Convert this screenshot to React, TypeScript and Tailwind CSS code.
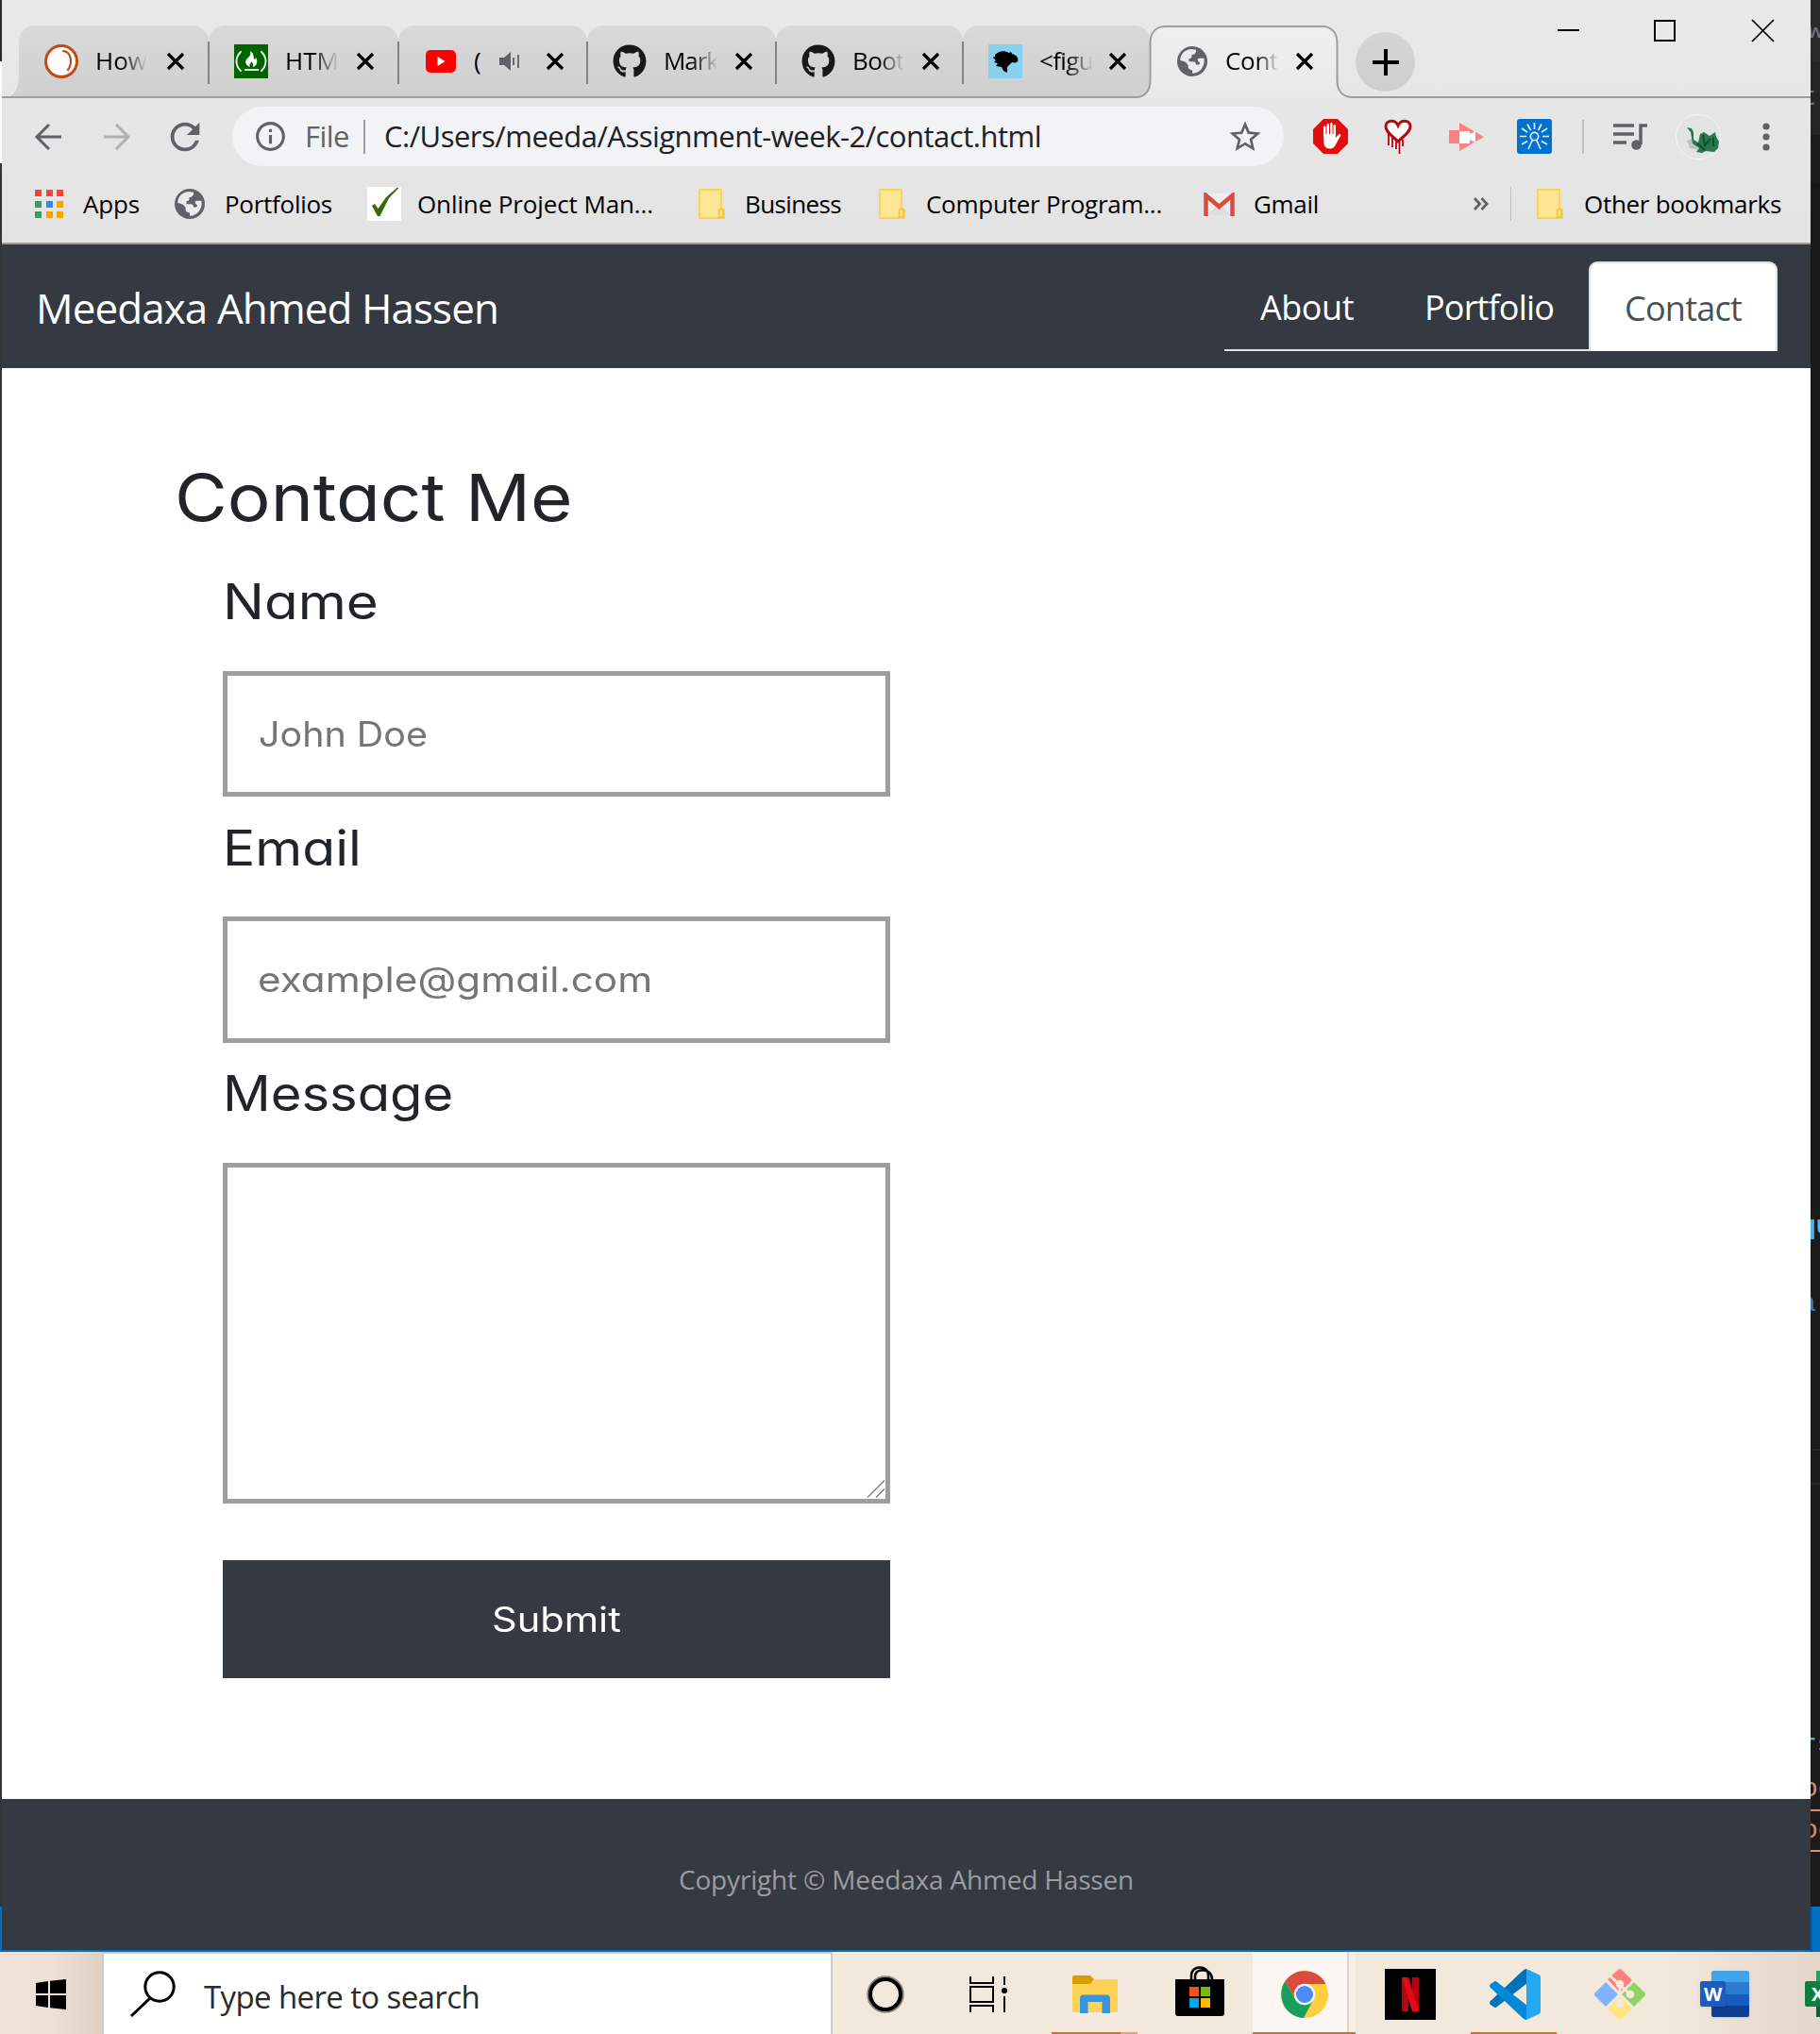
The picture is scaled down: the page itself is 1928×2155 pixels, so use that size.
import React, { useLayoutEffect, useRef, useState } from "react";
import { FaGithub } from "react-icons/fa";
import { MdStarBorder, MdRefresh, MdQueueMusic, MdInfoOutline } from "react-icons/md";

/* Single-line label whose tracking is adjusted so that it fills the given width. */
function Fit({ w, className = "", children }: { w: number; className?: string; children: string }) {
  const ref = useRef<HTMLSpanElement>(null);
  const [space, setSpace] = useState(0);
  useLayoutEffect(() => {
    if (ref.current) setSpace((w - ref.current.getBoundingClientRect().width) / children.length);
  }, [w, children]);
  return (
    <span ref={ref} className={"inline-block shrink-0 whitespace-nowrap " + className} style={{ letterSpacing: space }}>
      {children}
    </span>
  );
}

/* Single-line label widened to a round, geometric look across the given width. */
function Wide({ w, className = "", children }: { w: number; className?: string; children: string }) {
  const ref = useRef<HTMLSpanElement>(null);
  const [scale, setScale] = useState(1);
  useLayoutEffect(() => {
    if (ref.current) setScale(w / ref.current.offsetWidth);
  }, [w, children]);
  return (
    <span className={"block shrink-0 " + className} style={{ width: w }}>
      <span ref={ref} className="inline-block origin-left whitespace-nowrap" style={{ transform: `scaleX(${scale})` }}>
        {children}
      </span>
    </span>
  );
}

const Globe = ({ className = "" }: { className?: string }) => (
  <svg viewBox="0 0 24 24" className={"size-8 shrink-0 " + className}>
    <circle cx="12" cy="12" r="12" fill="#5f6368" />
    <path
      fill="#ebebeb"
      d="M2.4 11.2C2.6 6 6.600 2.300 11.500 2.300L15 2.800C15.300 5.200 14 6.800 11.600 6.800V8.200C11.600 9.600 10.600 9.800 9.400 9.800V12.100H12.500C14.200 12.100 15 13 15 14.600H16.800C18.300 14.600 18.200 12.900 17.200 12.400C15.800 11.500 16 9.600 17.800 9.600H21.300C22.400 15.500 18.400 21.600 12 21.600V19C9.700 19 8.400 17.500 8.800 15.800C8.400 13 5.500 11.600 2.400 11.200Z"
    />
  </svg>
);

const Close = () => (
  <svg viewBox="0 0 20 20" className="size-5 shrink-0">
    <path d="M2 2L18 18M18 2L2 18" stroke="#000" strokeWidth="3.2" />
  </svg>
);

const Folder = () => (
  <svg viewBox="0 0 28 32" className="h-8 w-7 shrink-0">
    <path d="M1 1H24V21L27 22V31H1Z" fill="#ffe694" stroke="#fad24c" strokeWidth="1.8" />
    <path d="M21.500 30V23C21.500 20.500 26 20.500 26 23V30Z" fill="#ffe07a" stroke="#f0c63a" strokeWidth="1.500" />
  </svg>
);

const Egg = () => (
  <svg viewBox="0 0 36 36" className="size-9">
    <circle cx="18" cy="18" r="16.500" fill="#fff" stroke="#c24a17" strokeWidth="3" />
    <path d="M20 7C29 8 30 20 25 27" fill="none" stroke="#c24a17" strokeWidth="2.200" strokeLinecap="round" />
  </svg>
);

const FreeCodeCamp = () => (
  <svg viewBox="0 0 36 36" className="size-9">
    <rect width="36" height="36" fill="#006400" />
    <path d="M7 8C1 14 1 22 7 28M29 8C35 14 35 22 29 28" fill="none" stroke="#fff" strokeWidth="1.800" strokeLinecap="round" />
    <path d="M17 7C23 11 19 14 22 16C23 15 23 14 22.500 13C26 18 24 23 20 24C21 21 19 19 18 18C18 21 15 21 17 24C11 22 11 17 15 14C17 12 18 10 17 7Z" fill="#fff" />
    <path d="M11 27H26" stroke="#fff" strokeWidth="1.800" />
  </svg>
);

const YouTube = () => (
  <svg viewBox="0 0 36 36" className="size-9">
    <rect x="2" y="6" width="32" height="24" rx="5" fill="#f00" />
    <path d="M14.500 13L22.500 18L14.500 23Z" fill="#fff" />
  </svg>
);

const Speaker = () => (
  <svg viewBox="0 0 22 22" className="size-[22px] shrink-0">
    <path d="M0 7H5L12 1V21L5 15H0Z" fill="#5f6368" />
    <path d="M15 7V15M20 4V18" stroke="#5f6368" strokeWidth="1.800" />
  </svg>
);

const DogHead = () => (
  <svg viewBox="0 0 36 36" className="size-9">
    <rect width="36" height="36" fill="#88d0f0" />
    <path d="M5 14L7 13L7 11C11 7 17 6 22 9L24 8L25 10C29 11 31 13 31.500 16C31.500 19 29 20 25 19L22 22L20 24V30L16 28L14 24L8 23L10 20L6 19L8 17Z" fill="#000" />
  </svg>
);

type TabInfo = { icon: React.ReactNode; label: string; w: number; width: string; sound?: boolean; last?: boolean };

const tabs: TabInfo[] = [
  { icon: <Egg />, label: "How", w: 55, width: "w-[201px]" },
  { icon: <FreeCodeCamp />, label: "HTM", w: 57, width: "w-[201px]" },
  { icon: <YouTube />, label: "(", w: 9, width: "w-[200px]", sound: true },
  { icon: <FaGithub className="size-9 text-[#191717]" />, label: "Mark", w: 58, width: "w-[200px]" },
  { icon: <FaGithub className="size-9 text-[#191717]" />, label: "Boot", w: 55, width: "w-[198px]" },
  { icon: <DogHead />, label: "<figu", w: 57, width: "w-[199px]", last: true },
];

function TabStrip() {
  return (
    <div className="relative flex h-[104px] items-start border-b-2 border-[#9d9d9d] pl-[18px] pt-[27px]">
      {tabs.map((t, i) => (
        <div key={i} className={"relative h-[75px] shrink-0 " + t.width}>
          <div
            className={
              "flex h-full items-center rounded-t-[17px] bg-linear-to-b from-[#d9d9d9] to-[#cfcfcf] pl-[27px] " +
              (t.last ? "rounded-br-[14px]" : "")
            }
          >
            <span className="size-9 shrink-0">{t.icon}</span>
            <div className="ml-[18px] flex w-[56px] items-center justify-between overflow-hidden">
              {t.sound ? (
                <>
                  <Fit w={t.w} className="-ml-[1px]">{t.label}</Fit>
                  <div className="mr-2"><Speaker /></div>
                </>
              ) : (
                <div className="[mask-image:linear-gradient(to_right,black_50%,transparent)]">
                  <Fit w={t.w}>{t.label}</Fit>
                </div>
              )}
            </div>
            <span className={i > 3 ? "ml-[17px]" : "ml-[19px]"}><Close /></span>
          </div>
          {!t.last && <div className="absolute -right-px top-[17px] z-10 h-[45px] w-[2px] bg-[#848484]" />}
        </div>
      ))}
      <svg viewBox="0 0 18 40" className="absolute bottom-0 left-0 h-10 w-[18px]">
        <path d="M18 0V40H9C15 36 18 28 18 20Z" fill="#d0d0d0" />
      </svg>
      <div className="relative h-[77px] w-[199px] shrink-0">
        <svg viewBox="0 0 230 77" className="absolute -left-4 top-0 h-[77px] w-[230px]">
          <defs>
            <linearGradient id="active" x1="0" y1="0" x2="0" y2="1">
              <stop offset="0" stopColor="#efefef" />
              <stop offset="1" stopColor="#e9e9e9" />
            </linearGradient>
          </defs>
          <path d="M0 76C10 76 15.500 69 15.500 58V19C15.500 7 22 1 32 1H197C207 1 213.500 7 213.500 19V58C213.500 69 219 76 230 76V78H0Z" fill="url(#active)" />
          <path d="M0 76C10 76 15.500 69 15.500 58V19C15.500 7 22 1 32 1H197C207 1 213.500 7 213.500 19V58C213.500 69 219 76 230 76" fill="none" stroke="#9d9d9d" strokeWidth="2" />
        </svg>
        <div className="relative flex h-[75px] items-center pl-[28px]">
          <Globe />
          <div className="ml-[19px] w-[56px] overflow-hidden [mask-image:linear-gradient(to_right,black_60%,transparent)]">
            <Fit w={56}>Cont</Fit>
          </div>
          <span className="ml-[18px]"><Close /></span>
        </div>
      </div>
      <div className="ml-[18px] mt-[7px] flex size-[63px] items-center justify-center rounded-full bg-linear-to-b from-[#d6d6d6] to-[#cdcdcd]">
        <svg viewBox="0 0 28 28" className="size-7">
          <path d="M14 1V27M1 14H27" stroke="#000" strokeWidth="4" strokeLinecap="round" />
        </svg>
      </div>
      <svg viewBox="0 0 230 26" className="ml-[151px] -mt-[7px] h-[26px] w-[230px]" fill="none" stroke="#000" strokeWidth="2">
        <path d="M0 12H23" />
        <path d="M103 2H124V23H103Z" />
        <path d="M206 1L229 24M229 1L206 24" strokeWidth="1.700" />
      </svg>
    </div>
  );
}

function Toolbar() {
  return (
    <div className="flex h-[81px] items-center">
      <svg viewBox="0 0 30 28" className="ml-[34px] h-7 w-[30px]" fill="none" stroke="#5f6368" strokeWidth="3">
        <path d="M29 14H3M16 1L3 14L16 27" />
      </svg>
      <svg viewBox="0 0 30 28" className="ml-[43px] h-7 w-[30px]" fill="none" stroke="#b0b1b2" strokeWidth="3">
        <path d="M1 14H27M14 1L27 14L14 27" />
      </svg>
      <MdRefresh className="ml-[34px] size-[46px] text-[#5f6368]" />
      <div className="ml-[27px] flex h-[63px] w-[1114px] items-center rounded-full bg-[#f1f3f4] text-[31px]">
        <MdInfoOutline className="ml-[22px] size-[37px] text-[#5f6368]" />
        <Fit w={47} className="ml-[18px] text-[#5f6368]">File</Fit>
        <div className="ml-[15px] h-9 w-[2px] bg-[#9aa0a6]" />
        <Fit w={696} className="ml-[20px] text-[#202124]">C:/Users/meeda/Assignment-week-2/contact.html</Fit>
        <MdStarBorder className="ml-[196px] size-[40px] text-[#5f6368]" />
      </div>
      <svg viewBox="0 0 37 37" className="ml-[31px] size-[37px]">
        <path d="M11 0H26L37 11V26L26 37H11L0 26V11Z" fill="#e40d0d" />
        <path d="M11 17V9C11 7 13.500 7 13.500 9V16H14.500V6.500C14.500 4.500 17 4.500 17 6.500V16H18V5.500C18 3.500 20.500 3.500 20.500 5.500V16H21.500V7.500C21.500 5.500 24 5.500 24 7.500V20L27 16.500C28 15.500 30 16.500 29 18L24 27C22 33 13 33 11.500 27Z" fill="#fff" />
      </svg>
      <svg viewBox="0 0 30 38" className="ml-[38px] h-[38px] w-[30px]">
        <path d="M5 16V28M9 20V30M13 24V32M16.500 24V37M20 22V29" stroke="#b8080e" strokeWidth="1.800" />
        <path d="M15 24C8 17 2 14 2 8C2 1 12 0 15 7C18 0 28 1 28 8C28 14 22 17 15 24Z" fill="#fff" stroke="#b8080e" strokeWidth="3" />
      </svg>
      <svg viewBox="0 0 37 30" className="ml-[39px] h-[30px] w-[37px]">
        <path d="M11 0L37 15L11 30Z" fill="#ff8080" />
        <rect y="8" width="12" height="14" fill="#ff8080" />
        <path d="M11 9H22V12L28 9V21L22 18V22H11Z" fill="#fff" />
      </svg>
      <svg viewBox="0 0 37 37" className="ml-[35px] size-[37px]">
        <rect width="37" height="37" rx="3" fill="#0072ce" />
        <g fill="none" stroke="#dff0ff" strokeWidth="1.700">
          <circle cx="18.500" cy="18.500" r="4.200" />
          <path d="M18.500 4V11M11 5.500L14.500 12M5 10L11 14M3 18.500H10M5 27L11 23.500M26 5.500L22.500 12M32 10L26 14M34 18.500H27M32 27L26 23.500M16.500 22L12 32M20.500 22L25 32" />
        </g>
      </svg>
      <div className="ml-[32px] h-9 w-[2px] bg-[#bfc1c3]" />
      <svg viewBox="0 0 36 30" className="ml-[31px] h-[30px] w-[36px]" fill="none" stroke="#5f6368" strokeWidth="3.500">
        <path d="M0 3H22M0 12H22M0 21H14M36 3H29V23" />
        <circle cx="24.500" cy="23.500" r="5.300" fill="#5f6368" stroke="none" />
      </svg>
      <svg viewBox="0 0 48 48" className="ml-[30px] size-12">
        <circle cx="24" cy="24" r="23.500" fill="#e2e4e4" stroke="#f4f4f4" />
        <path d="M12 28L19 25L24 38L15 36Z" fill="#bcc4c1" />
        <path d="M12 14L17 15L19 19V27L24 30L26 21L30 19L36 23L42 19L43 24L46 29L45 36L41 40L32 39L28 41L22 40L25 36L18 31L16 19Z" fill="#28774f" />
        <path d="M29 22L31 33L37 26M23 31L31 38M40 25V34" stroke="#10502f" strokeWidth="2" fill="none" />
      </svg>
      <svg viewBox="0 0 8 30" className="ml-[44px] h-[30px] w-2" fill="#5f6368">
        <circle cx="4" cy="4" r="3.600" />
        <circle cx="4" cy="15" r="3.600" />
        <circle cx="4" cy="26" r="3.600" />
      </svg>
    </div>
  );
}

const appDots = [
  "bg-[#ff4131]", "bg-[#ff4131]", "bg-[#ff4131]",
  "bg-[#34a058]", "bg-[#1e8fff]", "bg-[#f5a700]",
  "bg-[#34a058]", "bg-[#f5a700]", "bg-[#f5a700]",
];

function Bookmarks() {
  return (
    <div className="flex h-[74px] items-center border-b-2 border-[#9b9b9b] pb-[10px]">
      <div className="ml-[35px] grid w-[30px] grid-cols-3 gap-x-[4.5px] gap-y-[4.5px]">
        {appDots.map((c, i) => (
          <div key={i} className={"size-[7px] " + c} />
        ))}
      </div>
      <Fit w={60} className="ml-[21px]">Apps</Fit>
      <Globe className="ml-[37px]" />
      <Fit w={114} className="ml-[21px]">Portfolios</Fit>
      <svg viewBox="0 0 36 36" className="ml-[37px] size-9">
        <rect width="36" height="36" fill="#fff" />
        <path d="M5 20L8 18L11.500 23L20 11L32 .5L33.500 1L23 12L13.500 31H11Z" fill="#386a10" />
      </svg>
      <Fit w={250} className="ml-[17px]">Online Project Man...</Fit>
      <div className="ml-[48px]"><Folder /></div>
      <Fit w={102} className="ml-[21px]">Business</Fit>
      <div className="ml-[40px]"><Folder /></div>
      <Fit w={250} className="ml-[22px]">Computer Program...</Fit>
      <svg viewBox="0 0 33 25" className="ml-[44px] h-[25px] w-[33px]">
        <path d="M2 1H31V24H2Z" fill="#eee" />
        <path d="M3 24L16 13L30 24Z" fill="#ddd" />
        <path d="M2.500 25V3L16.500 15L30.500 3V25" fill="none" stroke="#dd4b3e" strokeWidth="4.500" />
      </svg>
      <Fit w={69} className="ml-[20px]">Gmail</Fit>
      <svg viewBox="0 0 16 14" className="ml-[164px] h-[14px] w-4" fill="none" stroke="#5f6368" strokeWidth="2.800">
        <path d="M1 1L6.500 7L1 13M8.500 1L14 7L8.500 13" />
      </svg>
      <div className="ml-[23px] h-9 w-px bg-[#bdbdbd]" />
      <div className="ml-[27px]"><Folder /></div>
      <Fit w={209} className="ml-[22px]">Other bookmarks</Fit>
    </div>
  );
}

function PageNav() {
  return (
    <nav className="flex h-[131px] items-center justify-between bg-[#353a42] pl-[36px] pr-[35px] text-white">
      <Fit w={490} className="mt-[3px] text-[44px]">Meedaxa Ahmed Hassen</Fit>
      <div className="flex h-[95px] items-center text-[36px]">
        <div className="flex h-full w-[386px] items-center border-b-2 border-[#dee2e6] pl-[38px] pt-[5px]">
          <Fit w={99}>About</Fit>
          <Fit w={137} className="ml-[75px]">Portfolio</Fit>
        </div>
        <div className="flex h-full w-[200px] items-center justify-center rounded-t-[9px] border-2 border-b-0 border-[#dee2e6] bg-white pt-[2px] text-[#495057]">
          <Fit w={124}>Contact</Fit>
        </div>
      </div>
    </nav>
  );
}

const geometric = "font-['Inter'] [font-feature-settings:'cv11']";

function ContactForm() {
  return (
    <main className={"h-[1516px] bg-white pl-[183px] text-[#212529] " + geometric}>
      <div className="flex h-[177px] items-end">
        <Wide w={422} className="text-[69px] leading-[80px]">Contact Me</Wide>
      </div>
      <form className="ml-[51px] flex w-[707px] flex-col">
        <label className="mt-[41px] text-[52px] leading-[60px]"><Wide w={165}>Name</Wide></label>
        <div className="mt-[43px] flex h-[133px] items-center border-[5px] border-[#9e9e9e] pl-[33px] text-[37px] text-[#757575]">
          <Wide w={179}>John Doe</Wide>
        </div>
        <label className="mt-[25px] text-[52px] leading-[60px]"><Wide w={147}>Email</Wide></label>
        <div className="mt-[42px] flex h-[134px] items-center border-[5px] border-[#9e9e9e] pl-[32px] text-[37px] text-[#757575]">
          <Wide w={418}>example@gmail.com</Wide>
        </div>
        <label className="mt-[24px] text-[52px] leading-[60px]"><Wide w={244}>Message</Wide></label>
        <div className="mt-[43px] flex h-[361px] items-end justify-end border-[5px] border-[#9e9e9e]">
          <svg viewBox="0 0 20 20" className="size-5" stroke="#777" strokeWidth="1.200">
            <path d="M1 18.500L19 .5M10 18.500L19 9.500" />
          </svg>
        </div>
        <button type="button" className="mt-[60px] flex h-[125px] items-center justify-center bg-[#353a42] text-left text-[37px] text-white">
          <Wide w={137}>Submit</Wide>
        </button>
      </form>
    </main>
  );
}

const Cortana = () => (
  <svg viewBox="0 0 40 40" className="size-10">
    <circle cx="20" cy="20" r="18.500" fill="none" stroke="#8c857d" strokeWidth="2.500" />
    <circle cx="20" cy="20" r="16" fill="none" stroke="#000" strokeWidth="4" />
  </svg>
);

const TaskView = () => (
  <svg viewBox="0 0 40 38" className="-ml-2 h-[38px] w-10" fill="none" stroke="#000" strokeWidth="2">
    <path d="M1 0V7H25V0M1 11H25V27H1ZM1 38V31H25V38M37 0V9M37 21V38" />
    <circle cx="37" cy="15" r="3" fill="#000" stroke="none" />
  </svg>
);

const Explorer = () => (
  <svg viewBox="0 0 48 40" className="h-10 w-12">
    <path d="M0 2Q0 0 2 0H19L23 4L20 9H0Z" fill="#dc9c00" />
    <path d="M0 9H19L23 4H46Q48 4 48 6V37Q48 39 46 39H2Q0 39 0 37Z" fill="#ffd155" />
    <path d="M8 40V24Q8 20.500 12 20.500H36Q40 20.500 40 24V40H31.500V28H16.500V40Z" fill="#3a95dd" />
  </svg>
);

const Store = () => (
  <svg viewBox="0 0 52 53" className="h-[53px] w-[52px]">
    <path d="M17 14V10C17 -1.500 35 -1.500 35 10V14M21 14V11C21 6 25 4 29 4.500C35 4 39 8 39 14" fill="none" stroke="#000" strokeWidth="2.500" />
    <path d="M0 14H52V50Q52 53 49 53H3Q0 53 0 50Z" fill="#000" />
    <path d="M15 22H25V32H15Z" fill="#f4511e" />
    <path d="M27 22H37V32H27Z" fill="#7fba00" />
    <path d="M15 34H25V44H15Z" fill="#00a4ef" />
    <path d="M27 34H37V44H27Z" fill="#ffb900" />
  </svg>
);

const Chrome = () => (
  <svg viewBox="0 0 50 50" className="size-[50px]">
    <circle cx="25" cy="25" r="25" fill="#ffcd40" />
    <path d="M25 14H47.500A25 25 0 0 0 4.500 11L15.500 30.500Z" fill="#db4a3f" />
    <path d="M4.500 11A25 25 0 0 0 24 50L34.500 30.500A11 11 0 0 1 15.500 30.500Z" fill="#17a05d" />
    <circle cx="25" cy="25" r="11.300" fill="#f3f3f3" />
    <circle cx="25" cy="25" r="9" fill="#4c8bf5" />
  </svg>
);

const Netflix = () => (
  <svg viewBox="0 0 54 54" className="size-[54px]">
    <rect width="54" height="54" fill="#000" />
    <path d="M18 9H25V45H18ZM29 9H36V45H29Z" fill="#b1060f" />
    <path d="M18 9H25L36 45H29Z" fill="#e50914" />
  </svg>
);

const VSCode = () => (
  <svg viewBox="0 0 54 54" className="size-[54px]">
    <path d="M39 0L40 15L8 40Q6 42 4 40L1 38Q-1 36 1 34L35 2Q37 0 39 0Z" fill="#0070b8" />
    <path d="M1 20Q-1 18 1 16L4 14Q6 12 8 14L40 39L39 54Q37 54 35 52Z" fill="#0288d8" />
    <path d="M39 0L52 6Q54 7 54 9V45Q54 47 52 48L39 54Z" fill="#24a8f2" />
  </svg>
);

const Git = () => (
  <svg viewBox="0 0 54 54" className="size-[54px]">
    <path d="M14 11L25 1Q27 -1 29 1L40 12L27 25Z" fill="#ff8080" />
    <path d="M42 14L53 25Q55 27 53 29L42 40L29 27Z" fill="#8ed460" />
    <path d="M12 14L25 27L12 40L1 29Q-1 27 1 25Z" fill="#80b3ff" />
    <path d="M27 29L40 42L29 53Q27 55 25 53L14 42Z" fill="#ffe680" />
    <path d="M16 7L27 17V37M27 17L38 27" stroke="#f5e9dc" strokeWidth="3" fill="none" />
    <g fill="#f5e9dc">
      <circle cx="27" cy="16" r="4.300" />
      <circle cx="27" cy="37" r="4.300" />
      <circle cx="38" cy="27" r="4.300" />
    </g>
  </svg>
);

const Word = () => (
  <div className="relative h-[50px] w-[52px]">
    <div className="ml-3 flex h-[49px] flex-col overflow-hidden rounded-[2px] shadow">
      <div className="flex-1 bg-[#41a5ee]" />
      <div className="flex-1 bg-[#2b7cd3]" />
      <div className="flex-1 bg-[#185abd]" />
      <div className="flex-1 bg-[#103f91]" />
    </div>
    <div className="absolute left-0 top-[11px] flex size-[27px] items-center justify-center rounded-[2px] bg-[#1b5cbe] text-[20px] font-bold leading-none text-white shadow">
      W
    </div>
  </div>
);

const Excel = () => (
  <div className="relative h-[50px] w-[52px]">
    <div className="ml-3 flex h-[49px] flex-col rounded-[2px]">
      <div className="flex-1 bg-[#21a366]" />
      <div className="flex-1 bg-[#107c41]" />
      <div className="flex-1 bg-[#185c37]" />
    </div>
    <div className="absolute left-0 top-[11px] flex size-[27px] items-center justify-center rounded-[2px] bg-[#107c41] text-[20px] font-bold leading-none text-white">
      X
    </div>
  </div>
);

function Taskbar() {
  const cell = "relative flex h-full w-[111.2px] shrink-0 items-center justify-center pt-[3px]";
  return (
    <div className="flex h-[87px] w-[1928px] overflow-hidden bg-[#f3e8dc]">
      <div className="flex w-[108px] shrink-0 items-center bg-linear-to-r from-[#efe2d8] via-[#eee0d5] to-[#dfd0c5] pl-[38px] pt-[3px]">
        <svg viewBox="0 0 32 32" className="size-8">
          <path d="M0 4L13 2V15H0ZM15 1.700L32 0V15H15ZM0 17H13V30L0 28ZM15 17H32V32L15 30.300Z" fill="#000" />
        </svg>
      </div>
      <div className="flex w-[774px] shrink-0 items-center border-2 border-b-0 border-[#ccc] bg-white">
        <svg viewBox="0 0 50 50" className="ml-[27px] size-[50px]" fill="none" stroke="#000" strokeWidth="3">
          <circle cx="32" cy="17" r="15.200" />
          <path d="M22 29L2 48" />
        </svg>
        <Fit w={292} className="ml-[29px] mt-[6px] text-[33px] text-[#2b2b2b]">Type here to search</Fit>
      </div>
      <div className="flex h-full w-[1046px] overflow-hidden [background:linear-gradient(to_right,#f3e8dc_85%,#e2d5ca)]">
        <div className={cell}><Cortana /></div>
        <div className={cell}><div className="ml-1"><TaskView /></div></div>
        <div className={cell}>
          <Explorer />
          <div className="absolute bottom-0 left-[10px] flex h-[2px] w-[91px]">
            <div className="w-[73px] bg-[#cf7227]" />
            <div className="flex-1 bg-[#e2a878]" />
          </div>
        </div>
        <div className={cell}><div className="-mt-2"><Store /></div></div>
        <div className={cell}>
          <div className="absolute inset-y-0 left-0 right-[2px] flex border-b-2 border-[#cf7227]">
            <div className="w-[100px] bg-[#fbf6f2]" />
            <div className="w-[2px] bg-[#dfd3c9]" />
            <div className="flex-1 bg-[#f7efe8]" />
          </div>
          <div className="relative"><Chrome /></div>
        </div>
        <div className={cell}><Netflix /></div>
        <div className={cell}>
          <VSCode />
          <div className="absolute bottom-0 left-[9px] h-[2px] w-[91px] bg-[#cf7227]" />
        </div>
        <div className={cell}><Git /></div>
        <div className={cell}><Word /></div>
        <div className={cell}><Excel /></div>
      </div>
    </div>
  );
}

/* Sliver of the code editor that stays visible beside the browser window. */
function EditorSliver() {
  const row = "flex h-10 shrink-0 items-center";
  return (
    <div className="flex w-[10px] shrink-0 flex-col overflow-hidden bg-[#1b1b1b] font-['Liberation_Mono'] text-[28px] leading-[30px]">
      <div className="flex h-[65px] shrink-0 items-center bg-[#2a2a2a] text-[#777]"><span className="-ml-[3px]">w</span></div>
      <div className="flex h-[78px] shrink-0 items-center bg-[#252525] text-[#777]"><span className="-ml-[10px]">tr</span></div>
      <div className="h-[50px] shrink-0 bg-[#1c1c1c]" />
      <div className="h-[1087px] shrink-0 bg-[#181818]" />
      <div className={row + " text-[#4fb4e8]"}><span className="-ml-[11px] font-bold">qu</span></div>
      <div className="h-[42px] shrink-0" />
      <div className={row + " text-[#3f83c0]"}><span className="-ml-[11px]">a</span></div>
      <div className="h-[133px] shrink-0" />
      <div className="h-[38px] shrink-0 border-y-2 border-[#262626]" />
      <div className="h-[256px] shrink-0" />
      <div className={row + " text-[#4fb4e8]"}><span className="-ml-[10px]">rs</span></div>
      <div className="h-[5px] shrink-0" />
      <div className="flex h-[45px] shrink-0 items-center border-b-2 border-[#ce9178] text-[#ce9178]"><span className="-ml-[9px]">oc</span></div>
      <div className="flex h-[43px] shrink-0 items-center border-b-2 border-[#ce9178] text-[#ce9178]"><span className="-ml-[9px]">oc</span></div>
      <div className="flex-1" />
      <div className="h-[48px] shrink-0 border-l-2 border-[#005fa8] bg-[#0071c1]" />
    </div>
  );
}

export default function App() {
  return (
    <div className="flex h-[2155px] w-[1928px] flex-col overflow-hidden bg-white font-['Open_Sans','Noto_Sans',sans-serif] text-[26px] text-black">
      <div className="flex h-[2068px]">
        <div className="flex w-[2px] shrink-0 flex-col">
          <div className="h-[65px] bg-[#2a2a2a]" />
          <div className="h-[108px] bg-white" />
          <div className="flex-1 bg-[#333]" />
          <div className="h-[48px] bg-[#0071c1]" />
        </div>
        <div className="flex w-[1916px] shrink-0 flex-col border-b-2 border-[#0071c1]">
          <div className="h-[259px] bg-linear-to-b from-[#e9e9e9] to-[#e3e3e3]">
            <TabStrip />
            <Toolbar />
            <Bookmarks />
          </div>
          <PageNav />
          <ContactForm />
          <footer className="flex flex-1 items-center justify-center bg-[#353a42] pt-[10px] text-[28px] text-[#9a9da1]">
            <Fit w={482}>Copyright © Meedaxa Ahmed Hassen</Fit>
          </footer>
        </div>
        <EditorSliver />
      </div>
      <Taskbar />
    </div>
  );
}
